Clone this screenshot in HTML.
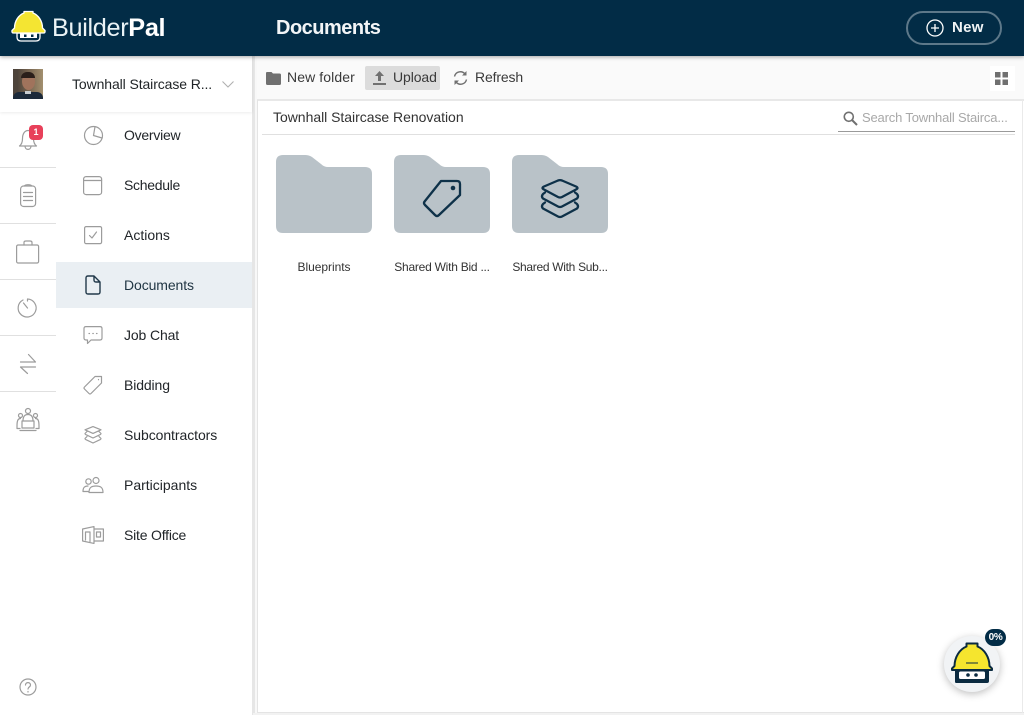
<!DOCTYPE html>
<html><head><meta charset="utf-8"><style>
*{box-sizing:border-box}
html,body{margin:0;padding:0}
body{width:1024px;height:715px;position:relative;overflow:hidden;background:#fff;font-family:"Liberation Sans",sans-serif;color:#212529}
.a{position:absolute}
.t{position:absolute;white-space:nowrap;line-height:20px;font-size:14px}
svg{position:absolute;overflow:visible}
.g{fill:none;stroke:#9c9c9c;stroke-width:1.2;stroke-linecap:round;stroke-linejoin:round}
.hr{position:absolute;left:0;width:56px;height:1px;background:#e0e0e0}
</style></head><body>
<div class="a" style="left:253px;top:56px;width:771px;height:44px;background:#fafafa"></div>
<div class="a" style="left:990px;top:66px;width:25px;height:25px;background:#fff"></div>
<div class="a" style="left:252px;top:56px;width:3px;height:659px;background:#e6e6e6"></div>
<div class="a" style="left:255px;top:56px;width:2px;height:659px;background:#f8f8f8"></div>
<div class="a" style="left:257px;top:99px;width:767px;height:2px;background:#e8e8e8"></div>
<div class="a" style="left:257px;top:100px;width:1px;height:613px;background:#e4e4e4"></div>
<div class="a" style="left:257px;top:712px;width:767px;height:1px;background:#e4e4e4"></div>
<div class="a" style="left:253px;top:713px;width:771px;height:2px;background:#f2f2f2"></div>
<div class="a" style="left:1022px;top:100px;width:1px;height:613px;background:#eaeaea"></div>
<div class="a" style="left:0;top:56px;width:252px;height:56px;background:#fff;box-shadow:0 1px 3px rgba(0,0,0,.08)"></div>
<div class="a" style="left:0;top:0;width:1024px;height:56px;background:#022c46;box-shadow:0 1px 4px rgba(0,0,0,.35)"></div>

<svg style="left:0;top:0" width="60" height="56" viewBox="0 0 60 56"><path d="M17 33H40V37Q40 41 36 41H21Q17 41 17 37Z" fill="#022c46" stroke="#fff" stroke-width="1.300"/><path d="M14.500 28A14 16 0 0 1 24 13V11.500H33V13A14 16 0 0 1 42.500 28L45 30.500Q45.500 33 43.500 33H13.500Q11.500 33 12 30.500Z" fill="#f4e532" stroke="#fff" stroke-width="1.300" stroke-linejoin="round"/><rect x="20" y="33.500" width="17" height="4.500" fill="#fff"/><rect x="24" y="34.500" width="2.500" height="2.500" fill="#022c46"/><rect x="31" y="34.500" width="2.500" height="2.500" fill="#022c46"/></svg>
<div class="t" style="left:52px;top:12px;font-size:25.300px;line-height:32px;color:#eaf3f6;letter-spacing:-.35px">Builder<b style="color:#fff">Pal</b></div>
<div class="t" style="left:276px;top:16px;font-size:20px;line-height:24px;font-weight:bold;color:#f2f5f7;letter-spacing:-.5px">Documents</div>
<div class="a" style="left:906px;top:11px;width:96px;height:34px;border:2px solid #5d7889;border-radius:17px"></div>
<svg style="left:926px;top:19px" width="18" height="18" viewBox="0 0 18 18"><circle cx="9" cy="9" r="8" fill="none" stroke="#fff" stroke-width="1.300"/><path d="M9 5V13M5 9H13" stroke="#fff" stroke-width="1.300"/></svg>
<div class="t" style="left:952px;top:18px;font-size:15px;font-weight:bold;color:#f0f3f5;letter-spacing:.3px">New</div>

<div class="a" style="left:13px;top:69px;width:30px;height:30px;background:linear-gradient(90deg,#4e443b 0 15%,#6f5e4b 45%,#a3906f);overflow:hidden"><div class="a" style="left:9px;top:4px;width:13px;height:17px;border-radius:50%;background:#a0735c"></div><div class="a" style="left:8px;top:3px;width:14px;height:6px;border-radius:6px 6px 0 0;background:#2a1f1a"></div><div class="a" style="left:0;top:23px;width:30px;height:7px;background:#1c2a3a;border-radius:6px 6px 0 0"></div><div class="a" style="left:12px;top:22px;width:6px;height:3px;background:#c8cdd0"></div></div>
<div class="t" style="left:72px;top:74px;color:#1f2326;letter-spacing:-.1px">Townhall Staircase R...</div>
<svg style="left:222px;top:81px" width="12" height="7" viewBox="0 0 12 7"><path d="M.5.5L6 6 11.500.5" fill="none" stroke="#b0b0b0" stroke-width="1.100"/></svg>

<!-- rail -->
<svg style="left:18px;top:129px" width="24" height="24" viewBox="0 0 24 24"><path class="g" d="M1.500 17C3.500 15.500 4.500 13.500 4.500 9.500 4.500 4.500 7 1.500 10 1.500 13 1.500 15.500 4.500 15.500 9.500 15.500 13.500 16.500 15.500 18.500 17ZM7 17C7 21.500 13 21.500 13 17"/></svg>
<div class="a" style="left:29px;top:125px;width:14px;height:15px;background:#e8405a;border-radius:4px;color:#fff;font-size:9px;line-height:15px;font-weight:bold;text-align:center">1</div>
<div class="hr" style="top:167px"></div>
<svg style="left:20px;top:184px" width="16" height="23" viewBox="0 0 16 23"><rect class="g" x=".6" y="2" width="15" height="20.500" rx="3"/><path class="g" d="M4.500 2C4.500 .3 11.500 .3 11.500 2M3.500 8.500H12.500M3.500 12.500H12.500M3.500 16.500H12.500"/></svg>
<div class="hr" style="top:223px"></div>
<svg style="left:16px;top:240px" width="24" height="24" viewBox="0 0 24 24"><rect class="g" x=".6" y="5" width="22" height="18" rx="1.500"/><path class="g" d="M8 5V2.500Q8 1 10 1H14Q16 1 16 2.500V5"/></svg>
<div class="hr" style="top:279px"></div>
<svg style="left:18px;top:298px" width="20" height="20" viewBox="0 0 20 20"><path class="g" d="M5 2A9 9 0 1 0 9.500 1V3M9.500 10L5.500 5"/></svg>
<div class="hr" style="top:335px"></div>
<svg style="left:20px;top:354px" width="16" height="20" viewBox="0 0 16 20"><path class="g" d="M.5 8H15.500L8.500 .5M15.500 13H.5L7.500 19.500"/></svg>
<div class="hr" style="top:391px"></div>
<svg style="left:16px;top:408px" width="24" height="24" viewBox="0 0 24 24"><circle class="g" cx="12" cy="3" r="2.500"/><circle class="g" cx="4.500" cy="7.500" r="2"/><circle class="g" cx="19.500" cy="7.500" r="2"/><path class="g" d="M7 13C7 8 9 6.500 12 6.500 15 6.500 17 8 17 13M1 18C1 12.500 2 10.500 4.500 10.500M23 18C23 12.500 22 10.500 19.500 10.500M6 13H18V20H6ZM1 18V20.500H4M23 18V20.500H20M4 22.500H20" stroke-width="1.100"/></svg>
<svg style="left:19px;top:678px" width="18" height="18" viewBox="0 0 18 18"><circle class="g" cx="9" cy="9" r="8"/><path class="g" d="M6.500 7C6.500 3.800 11.500 3.800 11.500 7 11.500 9 9 9 9 11M9 13.500V14"/></svg>

<!-- nav -->
<div class="a" style="left:56px;top:262px;width:196px;height:46px;background:#eaeff3"></div>
<div class="t" style="left:124px;top:125px;letter-spacing:-.25px">Overview</div>
<div class="t" style="left:124px;top:175px;letter-spacing:-.3px">Schedule</div>
<div class="t" style="left:124px;top:225px">Actions</div>
<div class="t" style="left:124px;top:275px;color:#1f3442;letter-spacing:-.1px">Documents</div>
<div class="t" style="left:124px;top:325px;letter-spacing:-.12px">Job Chat</div>
<div class="t" style="left:124px;top:375px;letter-spacing:-.12px">Bidding</div>
<div class="t" style="left:124px;top:425px;letter-spacing:-.07px">Subcontractors</div>
<div class="t" style="left:124px;top:475px">Participants</div>
<div class="t" style="left:124px;top:525px;letter-spacing:-.2px">Site Office</div>

<svg style="left:84px;top:126px" width="19" height="19" viewBox="0 0 19 19"><circle class="g" cx="9.500" cy="9.500" r="9"/><path class="g" d="M9.500 9.500L11 .7M9.500 9.500L18 12"/></svg>
<svg style="left:83px;top:176px" width="19" height="19" viewBox="0 0 19 19"><rect class="g" x=".6" y=".6" width="18" height="18" rx="2.500"/><path class="g" d="M.6 4.500H18.600"/></svg>
<svg style="left:84px;top:226px" width="18" height="18" viewBox="0 0 18 18"><rect class="g" x=".6" y=".6" width="17" height="17" rx="1.500"/><path class="g" d="M5.500 9.500L8 12 12.500 6" stroke-width="1"/></svg>
<svg style="left:85px;top:275px" width="16" height="20" viewBox="0 0 16 20"><path fill="none" stroke="#22394a" stroke-width="1.400" stroke-linejoin="round" d="M3 1H9L15 7V17Q15 19 13 19H3Q1 19 1 17V3Q1 1 3 1ZM9 1V5Q9 7 11 7H15"/></svg>
<svg style="left:83px;top:326px" width="20" height="20" viewBox="0 0 20 20"><path class="g" d="M3 .6H17Q19 .6 19 2.600V12Q19 14 17 14H8L4.500 17.500V14H3Q1 14 1 12V2.600Q1 .6 3 .6Z"/><path class="g" d="M6 7.500H6.500M9.800 7.500H10.300M13.500 7.500H14" stroke-width="1.600"/></svg>
<svg style="left:83px;top:375px" width="20" height="20" viewBox="0 0 20 20"><path class="g" d="M12 1.500H18.500V8L8 18.500Q7 19.500 6 18.500L1.500 14Q.5 13 1.500 12ZM15.500 4.500V4.700"/></svg>
<svg style="left:84px;top:426px" width="18" height="18" viewBox="0 0 18 18"><path class="g" d="M9 .6L17 3.800 9 7.400 1 3.800ZM3 5.500L1 7.500 Q1 8.200 2 8.700L9 12 16 8.700Q17 8.200 17 7.500L15 5.500M3 10.500L1 12.500Q1 13.200 2 13.700L9 17 16 13.700Q17 13.200 17 12.500L15 10.500"/></svg>
<svg style="left:82px;top:477px" width="22" height="16" viewBox="0 0 22 16"><circle class="g" cx="6.500" cy="4.500" r="2.700"/><circle class="g" cx="14" cy="3.500" r="3"/><path class="g" d="M1 14.500C1 10 3 9 6 9M7 15.500C7 10 10 9 14 9 18 9 21 10 21 15.500ZM1 14.500H6"/></svg>
<svg style="left:82px;top:526px" width="22" height="18" viewBox="0 0 22 18"><path class="g" d="M.6 3L12 .6V17.400L.6 15ZM12 3H21.400V15H12M3.500 14V6H8V15.500M14.500 6H18.500V11H14.500Z" stroke-width="1"/></svg>

<!-- toolbar -->
<svg style="left:266px;top:72px" width="15" height="13" viewBox="0 0 15 13"><path d="M1 0H5.500L7 1.500H13.500Q15 1.500 15 3V11.500Q15 13 13.500 13H1.500Q0 13 0 11.500V1Q0 0 1 0Z" fill="#707070"/></svg>
<div class="t" style="left:287px;top:67px;color:#3a3a3a;letter-spacing:.1px">New folder</div>
<div class="a" style="left:365px;top:66px;width:75px;height:24px;background:#dcdcdc;border-radius:2px"></div>
<svg style="left:373px;top:71px" width="13" height="14" viewBox="0 0 13 14"><path d="M6.500 0L11 5H8V10H5V5H2ZM0 12H13V14H0Z" fill="#707070"/></svg>
<div class="t" style="left:393px;top:67px;color:#3a3a3a;letter-spacing:-.1px">Upload</div>
<svg style="left:453px;top:70px" width="15" height="16" viewBox="0 0 15 16"><path d="M1.500 6.500A6 6 0 0 1 12 4M13.500 9.500A6 6 0 0 1 3 12" fill="none" stroke="#707070" stroke-width="1.400"/><path d="M13.500 1V5.500H9ZM1.500 15V10.500H6Z" fill="#707070"/></svg>
<div class="t" style="left:475px;top:67px;color:#3a3a3a;letter-spacing:-.15px">Refresh</div>
<svg style="left:995px;top:72px" width="13" height="13" viewBox="0 0 13 13" fill="#707070"><rect width="5.500" height="5.500"/><rect x="7.500" width="5.500" height="5.500"/><rect y="7.500" width="5.500" height="5.500"/><rect x="7.500" y="7.500" width="5.500" height="5.500"/></svg>

<!-- breadcrumb -->
<div class="t" style="left:273px;top:107px;color:#333;letter-spacing:-.03px">Townhall Staircase Renovation</div>
<div class="a" style="left:262px;top:134px;width:753px;height:1px;background:#e0e0e0"></div>
<div class="a" style="left:838px;top:131px;width:177px;height:1px;background:#9a9a9a"></div>
<svg style="left:843px;top:111px" width="15" height="15" viewBox="0 0 15 15"><circle cx="5.800" cy="5.800" r="4.500" fill="none" stroke="#707070" stroke-width="1.600"/><path d="M9 9L14 14" stroke="#707070" stroke-width="2"/></svg>
<div class="t" style="left:862px;top:107.500px;font-size:13px;color:#a8a8a8;letter-spacing:-.17px">Search Townhall Stairca...</div>

<!-- folders -->
<svg style="left:276px;top:155px" width="96" height="78" viewBox="0 0 96 78"><path d="M7 0H29Q33 0 36 2L45 9Q48 12 52 12H89Q96 12 96 19V71Q96 78 89 78H7Q0 78 0 71V7Q0 0 7 0Z" fill="#b9c2c8"/></svg>
<svg style="left:394px;top:155px" width="96" height="78" viewBox="0 0 96 78"><path d="M7 0H29Q33 0 36 2L45 9Q48 12 52 12H89Q96 12 96 19V71Q96 78 89 78H7Q0 78 0 71V7Q0 0 7 0Z" fill="#b9c2c8"/><path d="M47 26H63Q66 26 66 29V40L45 60Q43 62 41 60L31 50Q29 48 31 46Z" fill="none" stroke="#0e3149" stroke-width="2.300" stroke-linejoin="round"/><circle cx="59" cy="33" r="2.300" fill="#0e3149"/></svg>
<svg style="left:512px;top:155px" width="96" height="78" viewBox="0 0 96 78"><path d="M7 0H29Q33 0 36 2L45 9Q48 12 52 12H89Q96 12 96 19V71Q96 78 89 78H7Q0 78 0 71V7Q0 0 7 0Z" fill="#b9c2c8"/><path d="M46 25.500Q48 24.700 50 25.500L64 31.500Q67 33 64 34.500L50 42Q48 43 46 42L32 34.500Q29 33 32 31.500ZM33 37.500L31 39Q29 41.500 31 43.500L46 51.500Q48 52.500 50 51.500L65 43.500Q67 41.500 65 39L63 37.500M33 47.500L31 49Q29 51.500 31 53.500L46 61.500Q48 62.500 50 61.500L65 53.500Q67 51.500 65 49L63 47.500" fill="none" stroke="#0e3149" stroke-width="2.300" stroke-linejoin="round" stroke-linecap="round"/></svg>
<div class="t" style="left:276px;top:257px;width:96px;text-align:center;font-size:12px;color:#333;letter-spacing:-.03px">Blueprints</div>
<div class="t" style="left:394px;top:257px;width:96px;text-align:center;font-size:12px;color:#333;letter-spacing:-.24px">Shared With Bid ...</div>
<div class="t" style="left:512px;top:257px;width:96px;text-align:center;font-size:12px;color:#333;letter-spacing:-.3px">Shared With Sub...</div>

<!-- fab -->
<div class="a" style="left:944px;top:636px;width:56px;height:56px;border-radius:50%;background:#f1f3f5;box-shadow:0 2px 8px rgba(0,0,0,.25)"></div>
<svg style="left:951px;top:642px" width="42" height="42" viewBox="0 0 42 42"><path d="M4 40 Q4 41 6 41H36Q38 41 38 39V26H4Z" fill="#0a2a40"/><rect x="8" y="29.500" width="26" height="7.500" rx="1.500" fill="#fff"/><circle cx="17" cy="33" r="1.800" fill="#0a2a40"/><circle cx="25" cy="33" r="1.800" fill="#0a2a40"/><path d="M3.500 24A17.500 21 0 0 1 15.500 4.500V1.500H26.500V4.500A17.500 21 0 0 1 38.500 24L41 26.500V28H1V26.500Z" fill="#f5e52e" stroke="#0a2a40" stroke-width="2" stroke-linejoin="round"/><path d="M15 21H27" stroke="#0a2a40" stroke-width="1"/></svg>
<div class="a" style="left:985px;top:629px;width:21px;height:17px;border-radius:9px;background:#022c46;color:#fff;font-size:10px;line-height:17px;font-weight:bold;text-align:center;letter-spacing:-.3px">0%</div>
</body></html>
